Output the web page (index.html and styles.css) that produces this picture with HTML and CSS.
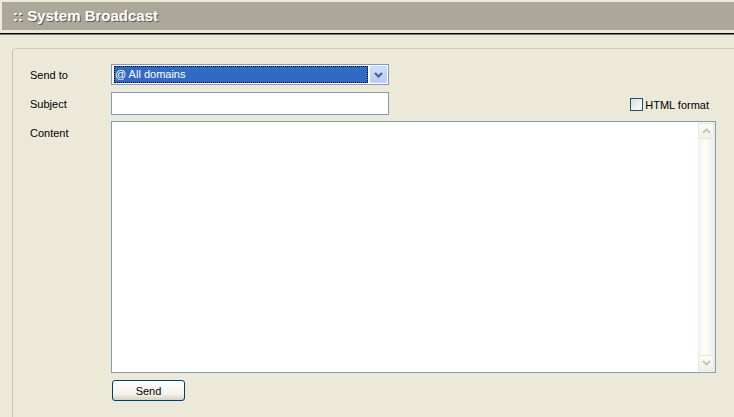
FILE: index.html
```html
<!DOCTYPE html>
<html>
<head>
<meta charset="utf-8">
<link rel="stylesheet" href="styles.css">
</head>
<body>
<div class="page">
  <div class="titlebar"><span class="title">:: System Broadcast</span></div>
  <div class="rule"></div>
  <div class="panel">
    <div class="row row-send">
      <div class="label">Send to</div>
      <div class="select">
        <div class="select-value">@ All domains</div>
        <div class="select-btn">
          <svg width="9" height="6" viewBox="0 0 9 6"><path d="M1 1 L4.5 4.5 L8 1" fill="none" stroke="#4D6185" stroke-width="2"/></svg>
        </div>
      </div>
    </div>

    <div class="row row-subject">
      <div class="label">Subject</div>
      <div class="input"></div>
      <label class="check"><span class="box"></span><span>HTML format</span></label>
    </div>

    <div class="row row-content">
      <div class="label label-top">Content</div>
      <div class="textarea">
        <div class="ta-body"></div>
        <div class="scrollbar">
          <div class="sb-btn">
            <svg width="9" height="6" viewBox="0 0 9 6"><path d="M1 5 L4.5 1.5 L8 5" fill="none" stroke="#C9C7BA" stroke-width="2"/></svg>
          </div>
          <div class="sb-track"></div>
          <div class="sb-btn">
            <svg width="9" height="6" viewBox="0 0 9 6"><path d="M1 1 L4.5 4.5 L8 1" fill="none" stroke="#C9C7BA" stroke-width="2"/></svg>
          </div>
        </div>
      </div>
    </div>

    <div class="row row-actions">
      <div class="label"></div>
      <button class="btn">Send</button>
    </div>
  </div>
</div>
</body>
</html>
```
FILE: styles.css
```css
html, body {
  margin: 0;
  padding: 0;
  background: #ECE9D8;
  font-family: "Liberation Sans", Arial, sans-serif;
  font-size: 11px;
  color: #000;
  overflow: hidden;
}
.page {
  width: 734px;
  height: 417px;
  padding-top: 2px;
  box-sizing: border-box;
  overflow: hidden;
}
.titlebar {
  margin-left: 2px;
  height: 28px;
  background: #ACA899;
  box-sizing: border-box;
  padding-left: 11px;
  display: flex;
  align-items: center;
}
.title {
  color: #fff;
  font-weight: bold;
  font-size: 15px;
  text-shadow: 1px 1px 0 #5E5C52;
  position: relative;
  top: -1px;
}
.rule {
  margin-top: 3px;
  height: 1px;
  background: #000;
  border-bottom: 1px solid #7A786C;
}
.panel {
  margin-top: 13px;
  margin-left: 12px;
  border-top: 1px solid #D0CDBE;
  border-left: 1px solid #C6C3B3;
  border-top-left-radius: 4px;
  height: 369px;
  box-sizing: border-box;
  padding: 15px 18px 0 17px;
}
.row {
  display: flex;
  align-items: center;
}
.row-send { margin-bottom: 7px; }
.row-subject { margin-bottom: 6px; }
.row-content { align-items: flex-start; margin-bottom: 7px; }
.label {
  width: 81px;
  flex: none;
  font-size: 11px;
}
.label-top {
  padding-top: 6px;
}
.select {
  width: 278px;
  height: 21px;
  box-sizing: border-box;
  border: 1px solid #7F9DB9;
  background: #fff;
  display: flex;
  align-items: center;
  padding: 0 1px 0 2px;
}
.select-value {
  flex: 1;
  height: 15px;
  background: #316AC5;
  color: #fff;
  border: 1px dotted #F0C000;
  outline: 1px dotted #000;
  outline-offset: -1px;
  line-height: 15px;
  padding-left: 0;
  margin-right: 2px;
}
.select-btn {
  width: 17px;
  height: 17px;
  box-sizing: border-box;
  background: linear-gradient(#D0DEFB, #B6CAF6);
  border: 1px solid #C6D5F7;
  border-radius: 1px;
  display: flex;
  align-items: center;
  justify-content: center;
}
.input {
  width: 278px;
  height: 23px;
  box-sizing: border-box;
  border: 1px solid #7F9DB9;
  background: #fff;
}
.check {
  margin-left: auto;
  margin-right: 7px;
  display: flex;
  align-items: center;
  gap: 2px;
  position: relative;
  top: 1px;
}
.box {
  width: 13px;
  height: 13px;
  box-sizing: border-box;
  border: 1px solid #1C5180;
  background: linear-gradient(135deg, #DCDCD7, #FFFFFF);
}
.textarea {
  flex: 1;
  height: 252px;
  box-sizing: border-box;
  border: 1px solid #7F9DB9;
  background: #fff;
  display: flex;
}
.ta-body {
  flex: 1;
}
.scrollbar {
  width: 17px;
  display: flex;
  flex-direction: column;
  background: linear-gradient(90deg, #F3F1EC, #FEFEFB 40%, #EEEDE5);
  padding: 1px 1px 1px 0;
  box-sizing: border-box;
}
.sb-track {
  flex: 1;
}
.sb-btn {
  height: 16px;
  box-sizing: border-box;
  border: 1px solid #E8E7DE;
  border-radius: 2px;
  background: linear-gradient(#FDFDFA, #F0EFE8);
  display: flex;
  align-items: center;
  justify-content: center;
}
.btn {
  margin: 0 0 0 1px;
  width: 73px;
  height: 21px;
  border: 1px solid #003C74;
  border-radius: 3px;
  background: linear-gradient(#FFFFFF, #F3F2EC 70%, #D6D0C5);
  font-family: "Liberation Sans", Arial, sans-serif;
  font-size: 11px;
  color: #000;
  padding: 0;
}
```
